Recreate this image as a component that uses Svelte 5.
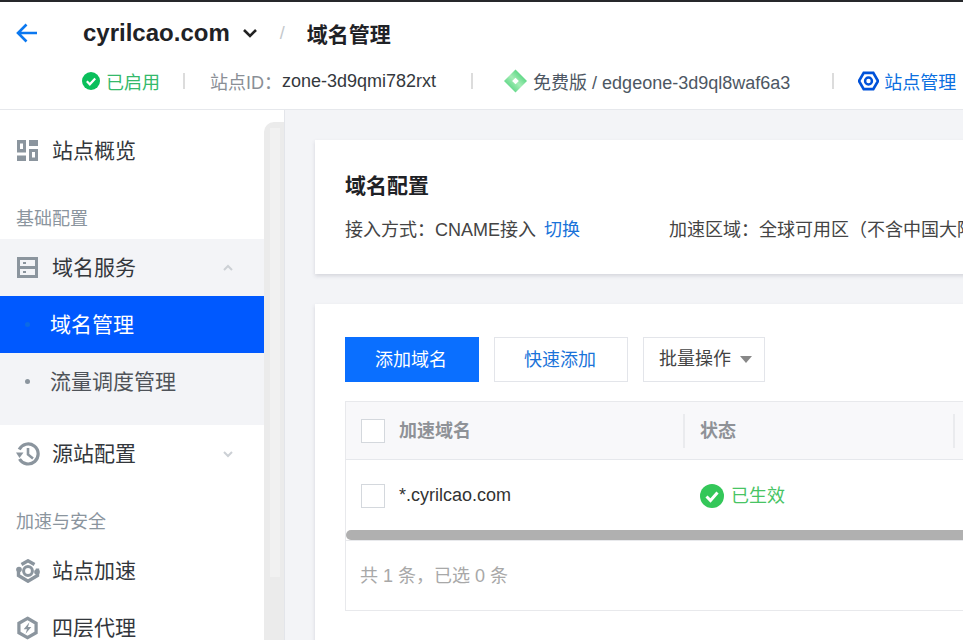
<script>
  const meta = { domain: "cyrilcao.com", zone: "zone-3d9qmi782rxt", plan: "免费版 / edgeone-3d9ql8waf6a3" };
</script>

<div class="page">
  <header class="top">
    <div class="titleRow">
      <svg class="back" viewBox="0 0 24 24" width="24" height="24"><path d="M22 12H3M11.500 3.500 3 12l8.500 8.500" fill="none" stroke="#0b78f0" stroke-width="2.600" /></svg>
      <span class="domain">{meta.domain}</span>
      <svg class="caret" viewBox="0 0 16 16" width="16" height="16"><path d="M2 5l6 6 6-6" fill="none" stroke="#222" stroke-width="2.600" /></svg>
      <span class="slash">/</span>
      <span class="pageTitle">域名管理</span>
    </div>
    <div class="metaRow">
      <span class="enabled">
        <svg viewBox="0 0 18 18" width="18" height="18"><circle cx="9" cy="9" r="9" fill="#0abf5b" /><path d="M4.800 9.300l3 3 5.400-5.700" fill="none" stroke="#fff" stroke-width="2.200" /></svg>
        已启用
      </span>
      <i class="sep s1"></i>
      <span class="zoneLabel">站点ID：</span><span class="zone">{meta.zone}</span>
      <i class="sep s2"></i>
      <svg class="gem" viewBox="0 0 24 24" width="23" height="24">
        <defs>
          <linearGradient id="gemFill" x1="0" y1="1" x2="1" y2="0">
            <stop offset="0" stop-color="#2fc765" />
            <stop offset="0.5" stop-color="#a4edb6" />
            <stop offset="1" stop-color="#22c45c" />
          </linearGradient>
        </defs>
        <path d="M12 0 24 12 12 24 0 12z" fill="url(#gemFill)" />
        <path d="M12 8.500l3.500 3.500-3.500 3.500L8.500 12z" fill="#fff" />
      </svg>
      <span class="plan">{meta.plan}</span>
      <i class="sep s3"></i>
      <svg class="hex" viewBox="0 0 22 22" width="21" height="22"><path d="M6 2.500h10l5 8.500-5 8.500H6L1 11z" fill="none" stroke="#0052d9" stroke-width="2.800" /><circle cx="11" cy="11" r="3.600" fill="none" stroke="#0052d9" stroke-width="2.600" /></svg>
      <span class="manage">站点管理</span>
    </div>
  </header>

  <div class="body">
    <aside class="side">
      <nav class="nav">
        <div class="item">
          <svg viewBox="0 0 21 21" width="21" height="21"><path d="M0 0h9v12.500H0zM0 15.500h9V21H0zM12 0h9v6h-9zM12 9h9v12h-9z" fill="#8b959e" /><path d="M3 3.500h3V9H3zM15 12h3v5.500h-3z" fill="#fff" /></svg>
          <span>站点概览</span>
        </div>
        <div class="label">基础配置</div>
        <div class="group">
          <div class="item">
            <svg viewBox="0 0 21 21" width="21" height="21"><path d="M0 0h21v21H0z" fill="#8b959e" /><path d="M3 3h15v6H3zM3 12h15v6H3z" fill="#f3f4f7" /><path d="M6 5h3v2H6zM6 14h3v2H6z" fill="#8b959e" /></svg>
            <span>域名服务</span>
            <svg class="chev" viewBox="0 0 10 10" width="10" height="10"><path d="M1 7l4-4 4 4" fill="none" stroke="#ccd0d5" stroke-width="2" /></svg>
          </div>
          <div class="sub active"><i class="dot"></i><span>域名管理</span></div>
          <div class="sub"><i class="dot"></i><span>流量调度管理</span></div>
        </div>
        <div class="item wide">
          <svg viewBox="0 0 24 24" width="24" height="24"><path d="M3.200 7.500A10 10 0 1 1 3.500 17" fill="none" stroke="#8b959e" stroke-width="3.200" /><path d="M0 10.500h7.500L3.500 16z" fill="#8b959e" /><path d="M12 6v6.500l5 4" fill="none" stroke="#8b959e" stroke-width="2.600" /></svg>
          <span>源站配置</span>
          <svg class="chev" viewBox="0 0 10 10" width="10" height="10"><path d="M1 3l4 4 4-4" fill="none" stroke="#ccd0d5" stroke-width="2" /></svg>
        </div>
        <div class="label second">加速与安全</div>
        <div class="item wide">
          <svg viewBox="0 0 24 24" width="24" height="24"><path d="M5.500 5.500 12 1.800l6.500 3.700M21.500 9.500v7L12 22.200 2.500 16.500v-7" fill="none" stroke="#8b959e" stroke-width="3.400" /><circle cx="12" cy="12" r="4.400" fill="none" stroke="#8b959e" stroke-width="3" /><circle cx="3" cy="10.500" r="2.800" fill="#8b959e" /><circle cx="21" cy="13" r="2.800" fill="#8b959e" /></svg>
          <span>站点加速</span>
        </div>
        <div class="item">
          <svg viewBox="0 0 22 24" width="21" height="24"><path d="M11 1.800 20 7v10l-9 5.200L2 17V7z" fill="none" stroke="#8b959e" stroke-width="3.400" /><path d="M13 6 7 13.200h3.500L9 18l6-7h-3.500z" fill="#8b959e" /></svg>
          <span>四层代理</span>
        </div>
      </nav>
      <div class="scroll"><div class="thumb"></div></div>
    </aside>

    <main class="main">
      <section class="card config">
        <h2>域名配置</h2>
        <div class="configRow">
          <span class="access">接入方式：CNAME接入 <a href="#top">切换</a></span>
          <span class="region">加速区域：全球可用区（不含中国大陆）</span>
        </div>
      </section>

      <section class="card list">
        <div class="actions">
          <button class="btn primary">添加域名</button>
          <button class="btn ghost">快速添加</button>
          <button class="btn batch">批量操作<i class="tri"></i></button>
        </div>
        <div class="table">
          <div class="thead">
            <div class="cell colName"><i class="check"></i><span>加速域名</span></div>
            <div class="cell colStatus"><span>状态</span></div>
          </div>
          <div class="tbody">
            <div class="cell colName"><i class="check"></i><span class="host">*.cyrilcao.com</span></div>
            <div class="cell colStatus">
              <svg viewBox="0 0 24 24" width="24" height="24"><circle cx="12" cy="12" r="12" fill="#34c759" /><path d="M6.500 12.500l4 4 7-8" fill="none" stroke="#fff" stroke-width="3" /></svg>
              <span class="live">已生效</span>
            </div>
          </div>
          <div class="hbar"></div>
          <div class="foot">共 1 条，已选 0 条</div>
        </div>
      </section>
    </main>
  </div>
</div>

<style>
  :global(body) {
    margin: 0;
  }

  .page {
    width: 963px;
    height: 640px;
    overflow: hidden;
    display: flex;
    flex-direction: column;
    background: #fff;
    font-family: "Liberation Sans", "Noto Sans CJK SC", sans-serif;
    color: #333;
  }

  .top {
    flex: none;
    height: 107px;
    border-top: 2px solid #26282b;
    border-bottom: 1px solid #e6e8ec;
    white-space: nowrap;
  }

  .titleRow {
    display: flex;
    align-items: center;
    height: 62px;
    padding-left: 15px;
  }

  .back {
    margin-right: 44px;
  }

  .domain {
    font-size: 24px;
    font-weight: 700;
    color: #1f2226;
  }

  .caret {
    margin-left: 12px;
  }

  .slash {
    margin-left: 22px;
    font-size: 18px;
    color: #c4c8cc;
  }

  .pageTitle {
    margin-left: 22px;
    font-size: 21px;
    font-weight: 700;
    color: #1f2226;
  }

  .metaRow {
    display: flex;
    align-items: center;
    height: 34px;
    padding-left: 82px;
    font-size: 18px;
  }

  .enabled {
    display: flex;
    align-items: center;
    gap: 6px;
    color: #35b96b;
  }

  .sep {
    width: 2px;
    height: 16px;
    background: #dcdcdc;
  }

  .s1 {
    margin: 0 25px 0 23px;
  }

  .s2 {
    margin: 0 31px 0 35px;
  }

  .s3 {
    margin: 0 24px 0 42px;
  }

  .zoneLabel {
    color: #8a8f96;
  }

  .zone {
    color: #34383d;
  }

  .gem {
    margin: 0 6px 0 0;
  }

  .plan {
    color: #4d5763;
  }

  .hex {
    margin-right: 5px;
  }

  .manage {
    color: #0b6fe0;
  }

  .body {
    flex: 1;
    display: flex;
    min-height: 0;
    background: #f3f4f7;
  }

  .side {
    flex: none;
    width: 284px;
    display: flex;
    border-right: 1px solid #e3e5ea;
    background: #fff;
  }

  .nav {
    width: 264px;
    padding-top: 12px;
  }

  .item {
    display: flex;
    align-items: center;
    height: 57px;
    padding-left: 17px;
    font-size: 21px;
    color: #33373c;
  }

  .item > svg:first-child {
    margin-right: 14px;
  }

  .wide {
    padding-left: 16px;
  }

  .wide > svg:first-child {
    margin-right: 12px;
  }

  .item span {
    flex: 1;
    padding-bottom: 4px;
  }

  .chev {
    margin-right: 31px;
  }

  .label {
    margin: 27px 0 7px;
    padding-left: 16px;
    height: 26px;
    line-height: 26px;
    font-size: 18px;
    color: #8b959e;
  }

  .second {
    margin-top: 27px;
  }

  .group {
    height: 186px;
    background: #f3f4f7;
  }

  .sub {
    display: flex;
    align-items: center;
    height: 57px;
    padding-left: 25px;
    font-size: 21px;
    color: #4f5359;
  }

  .sub span {
    padding-bottom: 4px;
  }

  .dot {
    width: 5px;
    height: 5px;
    margin-right: 20px;
    border-radius: 50%;
    background: #8b959e;
  }

  .active {
    background: #0059ff;
    color: #fff;
  }

  .active .dot {
    background: #0b6ae6;
  }

  .scroll {
    width: 20px;
    margin-top: 12px;
    border-radius: 10px 0 0 0;
    background: #ebebeb;
    padding: 6px 4px 0 6px;
    box-sizing: border-box;
  }

  .thumb {
    height: 449px;
    background: #f1f1f1;
  }

  .main {
    flex: 1;
    min-width: 0;
    padding: 30px 0 0 30px;
    display: flex;
    flex-direction: column;
    gap: 30px;
  }

  .card {
    width: 800px;
    background: #fff;
    box-shadow: 0 2px 4px rgba(54, 58, 80, 0.16);
    box-sizing: border-box;
  }

  .config {
    flex: none;
    height: 134px;
    padding: 30px 30px 0;
    white-space: nowrap;
  }

  h2 {
    margin: 0;
    height: 32px;
    line-height: 32px;
    font-size: 21px;
    font-weight: 700;
    color: #1f2226;
  }

  .configRow {
    display: flex;
    margin-top: 15px;
    font-size: 18px;
    line-height: 26px;
    color: #444;
  }

  .access {
    width: 324px;
  }

  .access a {
    color: #1a73d9;
    text-decoration: none;
    margin-left: 3px;
  }

  .list {
    flex: none;
    height: 400px;
    padding: 33px 30px 0;
  }

  .actions {
    display: flex;
    gap: 15px;
  }

  .btn {
    height: 45px;
    width: 134px;
    padding: 0 2px 3px 0;
    border: 1px solid #e3e5ea;
    background: #fff;
    font: inherit;
    font-size: 18px;
    box-sizing: border-box;
  }

  .primary {
    background: #0a6fff;
    border-color: #0a6fff;
    color: #fff;
  }

  .ghost {
    color: #1a73d9;
  }

  .batch {
    width: 122px;
    padding: 0 0 0 3px;
    color: #444;
    display: flex;
    align-items: center;
    justify-content: center;
    gap: 9px;
    line-height: 39px;
  }

  .tri {
    border-left: 6px solid transparent;
    border-right: 6px solid transparent;
    border-top: 7px solid #888;
  }

  .table {
    margin-top: 19px;
    width: 770px;
    border: 1px solid #e8e9ec;
    border-right: 0;
    border-bottom: 0;
  }

  .thead,
  .tbody {
    display: flex;
  }

  .thead {
    height: 57px;
    border-bottom: 1px solid #e6e8ec;
    background: #f8f8fa;
    font-size: 18px;
    font-weight: 700;
    color: #8f9297;
  }

  .thead span {
    padding-bottom: 3px;
  }

  .tbody {
    height: 70px;
    font-size: 18px;
    color: #333;
  }

  .cell {
    display: flex;
    align-items: center;
    box-sizing: border-box;
  }

  .colName {
    width: 338px;
    padding-left: 15px;
  }

  .colStatus {
    width: 270px;
    padding-left: 16px;
  }

  .tbody .colName {
    padding-top: 1px;
  }

  .thead .colStatus {
    position: relative;
  }

  .thead .colStatus::before,
  .thead .colStatus::after {
    content: "";
    position: absolute;
    top: 12px;
    height: 34px;
    width: 2px;
    background: #eaebee;
  }

  .thead .colStatus::before {
    left: -1px;
  }

  .thead .colStatus::after {
    right: -1px;
  }

  .check {
    flex: none;
    width: 24px;
    height: 24px;
    margin-right: 14px;
    border: 1px solid #d4d8dd;
    background: #fff;
    box-sizing: border-box;
  }

  .tbody .colStatus {
    gap: 7px;
    padding-top: 2px;
  }

  .live {
    padding-bottom: 4px;
    color: #48c464;
  }

  .hbar {
    height: 10px;
    border-radius: 5px 0 0 5px;
    background: #b0b0b0;
  }

  .foot {
    height: 71px;
    line-height: 71px;
    padding-left: 14px;
    border-top: 1px solid #e8e9ec;
    border-bottom: 1px solid #e8e9ec;
    font-size: 18px;
    color: #a8a8a8;
    box-sizing: border-box;
  }
</style>
